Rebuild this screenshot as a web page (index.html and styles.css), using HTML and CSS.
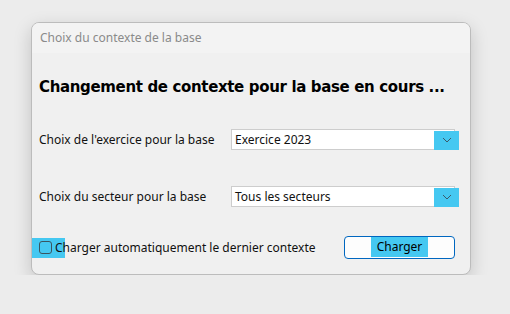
FILE: index.html
```html
<!DOCTYPE html>
<html>
<head>
	<meta charset="utf-8">
	<title>Choix du contexte de la base</title>
	<link rel="stylesheet" href="styles.css">
</head>
<body>
	<div class="window">
		<div class="titlebar">Choix du contexte de la base</div>
		<div class="content">
			<h1>Changement de contexte pour la base en cours ...</h1>

			<div class="row first">
				<span class="label">Choix de l'exercice pour la base</span>
				<div class="combo">
					<span class="value">Exercice 2023</span>
					<span class="arrow"><svg width="10" height="6" viewBox="0 0 10 6"><path d="M1 1l4 4 4-4" fill="none" stroke="#3a5a6a" stroke-width="1"/></svg></span>
				</div>
			</div>

			<div class="row">
				<span class="label">Choix du secteur pour la base</span>
				<div class="combo">
					<span class="value">Tous les secteurs</span>
					<span class="arrow"><svg width="10" height="6" viewBox="0 0 10 6"><path d="M1 1l4 4 4-4" fill="none" stroke="#3a5a6a" stroke-width="1"/></svg></span>
				</div>
			</div>

			<div class="footer">
				<label class="check"><span class="hl"><span class="box"></span></span>Charger automatiquement le dernier contexte</label>
				<button class="btn"><span>Charger</span></button>
			</div>
		</div>
	</div>
</body>
</html>
```

FILE: styles.css
```css
body {
	margin:0;
	background-color:#ececec;
	font-family:"Noto Sans", sans-serif;
	font-size:12px;
	color:#111;
}

.window {
	margin:22px 0 0 31px;
	width:438px;
	height:251px;
	border:1px solid #bcbcbc;
	border-radius:8px;
	background-color:#f0f0f0;
	box-shadow:0 6px 18px rgba(0,0,0,0.18);
	overflow:hidden;
}

.titlebar {
	height:30px;
	line-height:30px;
	padding-left:8px;
	background-color:#f3f3f3;
	color:#8a8a8a;
}

.content {
	padding:0 11px 0 7px;
}

h1 {
	margin:22px 0 0 0;
	font-family:"DejaVu Sans", sans-serif;
	font-size:15px;
	letter-spacing:-0.35px;
	font-weight:bold;
	color:#000;
	height:24px;
	line-height:24px;
	white-space:nowrap;
}

.row {
	display:flex;
	align-items:center;
	margin-top:36px;
}
.row.first {
	margin-top:30px;
}

.label {
	width:192px;
}

.combo {
	display:flex;
	align-items:center;
	width:222px;
	height:19px;
	border:1px solid #cdcdcd;
	background-color:#fff;
}
.combo .value {
	flex:1;
	padding-left:3px;
}
.combo .arrow {
	display:flex;
	align-items:center;
	justify-content:center;
	width:25px;
	height:19px;
	margin-right:-5px;
	margin-top:1px;
	background-color:#45c8f1;
}

.footer {
	display:flex;
	align-items:center;
	justify-content:space-between;
	margin-top:29px;
	margin-left:-8px;
}

.check {
	display:flex;
	align-items:center;
}
.check .hl {
	display:flex;
	align-items:center;
	width:26px;
	height:20px;
	padding-left:8px;
	background-color:#45c8f1;
	margin-right:-10px;
}
.check .box {
	width:11px;
	height:11px;
	border:1px solid #3a5560;
	border-radius:3px;
}

.btn {
	display:flex;
	justify-content:center;
	align-items:flex-start;
	width:111px;
	height:23px;
	padding:0;
	border:1px solid #0067c0;
	border-radius:4px;
	background-color:#fdfdfd;
	font-family:"Noto Sans", sans-serif;
	font-size:12px;
	margin-right:4px;
}
.btn span {
	display:block;
	width:57px;
	height:20px;
	line-height:20px;
	background-color:#45c8f1;
}
```
